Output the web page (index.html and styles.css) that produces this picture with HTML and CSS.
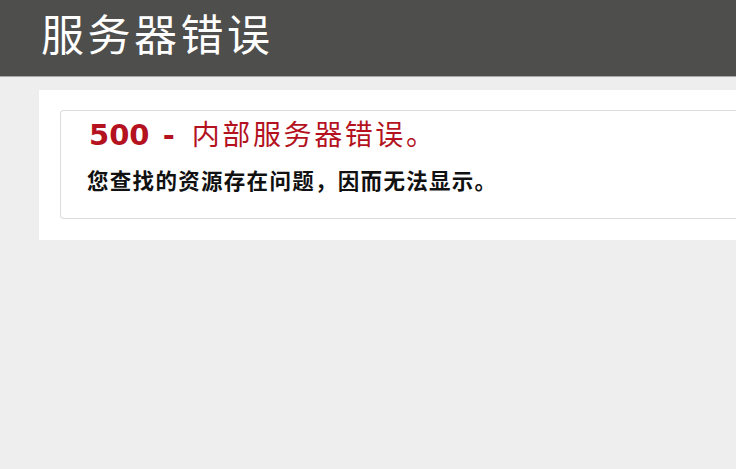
FILE: index.html
```html
<!DOCTYPE html>
<html>
<head>
    <meta charset="utf-8">
    <title>服务器错误</title>
    <link rel="stylesheet" href="styles.css">
</head>
<body>
    <div class="page">
        <div class="header">
            <h1>服务器错误</h1>
        </div>
        <div class="content">
            <div class="panel">
                <fieldset>
                    <h2>500 - <span class="desc">内部服务器错误。</span></h2>
                    <h3>您查找的资源存在问题，因而无法显示。</h3>
                </fieldset>
            </div>
        </div>
    </div>
</body>
</html>
```

FILE: styles.css
```css
* {
    margin: 0;
    padding: 0;
    box-sizing: border-box;
}

body {
    background: #fff;
    font-family: "DejaVu Sans", "Noto Sans CJK SC", sans-serif;
}

.page {
    width: 736px;
    min-height: 469px;
    background: #eeeeee;
    overflow: hidden;
}

.header {
    height: 77px;
    background: #4e4e4c;
    border-bottom: 1px solid #a9a9a9;
    padding-left: 41px;
}

.header h1 {
    color: #fff;
    font-family: "Noto Sans CJK SC", sans-serif;
    font-weight: 400;
    font-size: 43px;
    letter-spacing: 3.5px;
    line-height: 64px;
}

.content {
    padding: 13px 0 0 39px;
}

.panel {
    background: #fff;
    padding: 20px 0 21px 21px;
}

fieldset {
    border: 1px solid #dcdcdc;
    border-right: 0;
    border-radius: 4px 0 0 4px;
    height: 109px;
    padding: 3px 0 0 28px;
}

h2 {
    color: #b3121e;
    font-size: 29px;
    font-weight: bold;
    line-height: 38px;
    word-spacing: 3px;
}

h2 .desc {
    font-family: "Noto Sans CJK SC", sans-serif;
    font-weight: 400;
    font-size: 28px;
    letter-spacing: 2.6px;
    margin-left: 4px;
}

h3 {
    color: #111;
    font-family: "Noto Sans CJK SC", sans-serif;
    font-size: 21.5px;
    font-weight: 700;
    letter-spacing: 1.3px;
    line-height: 30px;
    margin-top: 11px;
    margin-left: -2px;
}
```
